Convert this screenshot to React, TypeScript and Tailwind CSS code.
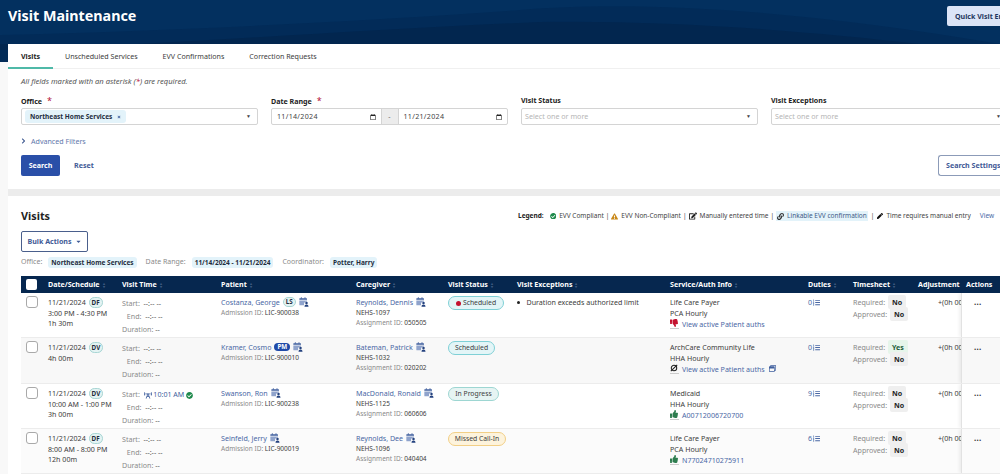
import { FaCheckCircle, FaExclamationTriangle, FaEdit, FaLink, FaPen, FaThumbsUp, FaThumbsDown, FaListOl, FaRegCalendar, FaChevronRight, FaCaretDown, FaBroadcastTower, FaRegWindowRestore, FaTimes } from "react-icons/fa";

const Star = () => <span className="text-[#b3123a] font-normal text-[9px]">*</span>;

const CalUser = () => (
  <svg viewBox="0 0 12 12" className="inline-block w-[10px] h-[10px] shrink-0" fill="#3f5f9e">
    <path d="M1 1.5h8a.6.6 0 0 1 .6.6V3.4H.4V2.1A.6.6 0 0 1 1 1.5z" />
    <path d="M.4 4.2h9.2v1.2A3 3 0 0 0 6 8.8V10H1a.6.6 0 0 1-.6-.6z" fill="#8fa3cc" />
    <rect x="2.2" y=".4" width="1.2" height="1.6" />
    <rect x="6.6" y=".4" width="1.2" height="1.6" />
    <circle cx="9" cy="7.2" r="1.5" fill="#24427f" />
    <path d="M6.6 11.6c0-1.6 1-2.5 2.4-2.5s2.4.9 2.4 2.5z" fill="#24427f" />
  </svg>
);

const Sort = () => (
  <span className="inline-flex flex-col ml-[3px] text-[#3d5a80] text-[4px] leading-[3px]">
    <span>▴</span>
    <span>▾</span>
  </span>
);

const Chip = ({ children }: { children: React.ReactNode }) => (
  <span className="bg-[#e3f3fa] rounded-[3px] px-[3px] py-[1px] font-bold text-[#1f2d3d] text-[6.5px] leading-[9px]">{children}</span>
);

const Select = ({ children }: { children: React.ReactNode }) => (
  <div className="h-[17px] border border-[#d4d4d4] rounded-[2px] bg-white flex items-center px-[3px] justify-between">
    {children}
    <span className="text-[#444] text-[5px] mr-[3px]">▼</span>
  </div>
);

const DateField = ({ v }: { v: string }) => (
  <div className="flex-1 h-[17px] flex items-center justify-between pl-[5px] pr-[3px] text-[7.1px] text-[#444] tracking-[0.3px]">
    <span>{v}</span>
    <FaRegCalendar className="text-[#222] w-[6px] h-[6px] mr-[2px]" />
  </div>
);

const Label = ({ children }: { children: React.ReactNode }) => (
  <div className="text-[7.1px] font-bold text-[#222] leading-[11px] mb-[2px] h-[11px]">{children}</div>
);

type Row = {
  date: string; tag: string; sched?: string; dur: string;
  start?: boolean;
  patient: string; badge?: string; adm: string;
  cg: string; nehs: string; asg: string;
  status: string; statusCls: string; statusW: string; dot?: boolean;
  exc?: string;
  pay: string; svc: string; auth: string; authKind: "down" | "none" | "up"; duties: string;
  req: string; bg: string; h: string;
};

const rows: Row[] = [
  { date: "11/21/2024", tag: "DF", sched: "3:00 PM - 4:30 PM", dur: "1h 30m", patient: "Costanza, George", badge: "LS", adm: "LIC-900038", cg: "Reynolds, Dennis", nehs: "NEHS-1097", asg: "050505", status: "Scheduled", statusCls: "bg-[#e3f5f7] border-[#7fd0d6]", statusW: "w-[56px]", dot: true, exc: "Duration exceeds authorized limit", pay: "Life Care Payer", svc: "PCA Hourly", auth: "View active Patient auths", authKind: "down", duties: "0", req: "No", bg: "bg-white", h: "h-[45px]" },
  { date: "11/21/2024", tag: "DV", dur: "4h 00m", patient: "Kramer, Cosmo", badge: "PM", adm: "LIC-900010", cg: "Bateman, Patrick", nehs: "NEHS-1032", asg: "020202", status: "Scheduled", statusCls: "bg-[#e3f5f7] border-[#7fd0d6]", statusW: "w-[47px]", pay: "ArchCare Community Life", svc: "HHA Hourly", auth: "View active Patient auths", authKind: "none", duties: "0", req: "Yes", bg: "bg-[#f8f8f8]", h: "h-[46px]" },
  { date: "11/21/2024", tag: "DV", sched: "10:00 AM - 1:00 PM", dur: "3h 00m", start: true, patient: "Swanson, Ron", adm: "LIC-900238", cg: "MacDonald, Ronald", nehs: "NEHS-1125", asg: "060606", status: "In Progress", statusCls: "bg-[#e6f4f3] border-[#9dd6d2]", statusW: "w-[51px]", pay: "Medicaid", svc: "HHA Hourly", auth: "A00712006720700", authKind: "up", duties: "9", req: "No", bg: "bg-white", h: "h-[45px]" },
  { date: "11/21/2024", tag: "DF", sched: "8:00 AM - 8:00 PM", dur: "12h 00m", patient: "Seinfeld, Jerry", adm: "LIC-900019", cg: "Reynolds, Dee", nehs: "NEHS-1096", asg: "040404", status: "Missed Call-In", statusCls: "bg-[#fdf3dc] border-[#f2cf86]", statusW: "w-[58px]", pay: "Life Care Payer", svc: "PCA Hourly", auth: "N77024710275911", authKind: "up", duties: "6", req: "No", bg: "bg-[#fbfbfb]", h: "h-[45px]" },
];

const cols = "grid-cols-[27px_74px_99px_135px_92px_69px_153px_138px_45px_65px_43px_38px]";

const Tag = ({ t, dark }: { t: string; dark?: boolean }) => (
  <span className={dark ? "ml-[1px] bg-[#1f4aa8] text-white rounded-full px-[3px] text-[6.3px] font-bold leading-[8px]" : "ml-[1px] bg-[#e4f3f3] border border-[#a9d6d4] text-[#1f2d3d] rounded-full px-[2px] text-[6.3px] font-bold leading-[8px]"}>{t}</span>
);

const AuthIcon = ({ k }: { k: Row["authKind"] }) => {
  if (k === "down") return <FaThumbsDown className="w-[8px] h-[8px] text-[#c4122f]" />;
  if (k === "up") return <FaThumbsUp className="w-[8px] h-[8px] text-[#2e7d4f]" />;
  return (
    <svg viewBox="0 0 10 10" className="w-[8px] h-[8px] text-[#222]" fill="none" stroke="currentColor" strokeWidth="1.3">
      <circle cx="5" cy="5" r="3.4" />
      <path d="M1 9 9 1" />
    </svg>
  );
};

const Yn = ({ v }: { v: string }) => (
  <span className={`${v === "Yes" ? "bg-[#e6f5ea] text-[#1d5c38]" : "bg-[#efefef] text-[#222]"} ml-[1px] font-bold px-[4px] rounded-[2px] py-[2px]`}>{v}</span>
);

function TableRow({ r }: { r: Row }) {
  return (
    <div className={`grid ${cols} ${r.h} ${r.bg} border-b border-[#ececec] text-[7.1px] text-[#3c3c3c] leading-[10.7px] overflow-hidden`}>
      <div className="pl-[5px] pt-[3px]">
        <div className="w-[12px] h-[12px] rounded-[3px] border border-[#a9a9a9] bg-white" />
      </div>
      <div className="pt-[4px] whitespace-nowrap">
        <div>{r.date} <Tag t={r.tag} /></div>
        {r.sched && <div>{r.sched}</div>}
        <div>{r.dur}</div>
      </div>
      <div className="pt-[4px] text-[#8a8a8a] leading-[12.8px] whitespace-nowrap">
        <div>Start:&nbsp; {r.start ? <span className="text-[#3f5f9e]"><FaBroadcastTower className="inline w-[8px] h-[7px]" /> 10:01 AM <FaCheckCircle className="inline w-[7px] h-[7px] text-[#1f8a4c]" /></span> : <span className="text-[#555]">--:-- --</span>}</div>
        <div className="pl-[3px]">&nbsp;End:&nbsp; <span className="text-[#555]">--:-- --</span></div>
        <div>Duration: <span className="text-[#555]">--</span></div>
      </div>
      <div className="pt-[4px] whitespace-nowrap">
        <div className="flex items-center gap-[2px] h-[10.7px]">
          <span className="text-[#4a68a5]">{r.patient}</span>
          {r.badge && <Tag t={r.badge} dark={r.badge === "PM"} />}
          <span className="ml-[1px] flex"><CalUser /></span>
        </div>
        <div className="mt-[0.5px] text-[6.5px]"><span className="text-[#8a8a8a]">Admission ID:</span> <span>{r.adm}</span></div>
      </div>
      <div className="pt-[4px] whitespace-nowrap">
        <div className="flex items-center gap-[3px] h-[10.7px]"><span className="text-[#4a68a5]">{r.cg}</span><CalUser /></div>
        <div className="text-[6.5px]">{r.nehs}</div>
        <div className="text-[6.5px]"><span className="text-[#8a8a8a]">Assignment ID:</span> {r.asg}</div>
      </div>
      <div className="pt-[3px]">
        <div className={`${r.statusW} h-[14px] border rounded-full flex items-center justify-center gap-[2px] whitespace-nowrap text-[6.8px] ${r.statusCls}`}>
          {r.dot && <span className="w-[5px] h-[5px] rounded-full bg-[#c4122f]" />}
          {r.status}
        </div>
      </div>
      <div className="pt-[4px] whitespace-nowrap">
        {r.exc && <div className="flex items-center"><span className="w-[2.5px] h-[2.5px] rounded-full bg-[#222] mr-[7px]" />{r.exc}</div>}
      </div>
      <div className="pt-[4px] whitespace-nowrap">
        <div>{r.pay}</div>
        <div>{r.svc}</div>
        <div className="flex items-center gap-[2px]">
          <span className="w-[9px] h-[11px] border-b border-[#ccc] flex items-center"><AuthIcon k={r.authKind} /></span>
          <span className="text-[#4a68a5] ml-[1px]">{r.auth}</span>
          {r.authKind === "none" && <FaRegWindowRestore className="ml-[2px] w-[7px] h-[7px] text-[#3f5f9e]" />}
        </div>
      </div>
      <div className="pt-[4px] text-[#4a68a5] whitespace-nowrap flex items-start gap-[1px]">
        <span>{r.duties}</span>
        <FaListOl className="w-[7px] h-[7px] mt-[2px]" />
      </div>
      <div className="pt-[3px] text-[#8a8a8a] whitespace-nowrap leading-[12px]">
        <div>Required: <Yn v={r.req} /></div>
        <div>Approved: <Yn v="No" /></div>
      </div>
      <div className="pt-[4px] pl-[20px] overflow-hidden whitespace-nowrap">+(0h 00m)</div>
      <div className="pt-[4px] pl-[12px] border-l border-[#e2e2e2] shadow-[-2px_0_3px_rgba(0,0,0,0.06)] font-bold text-[#333] text-[8px] bg-inherit relative tracking-[0.3px]">...</div>
    </div>
  );
}

export default function App() {
  return (
    <div className="w-[1000px] h-[474px] overflow-hidden bg-[#f8f8f8] font-['Noto_Sans',sans-serif] relative">
      <div className="absolute left-0 top-0 w-[1000px] h-[62px] bg-[#022b58] overflow-hidden">
        <svg viewBox="0 0 1000 62" preserveAspectRatio="none" className="w-full h-full">
          <path d="M0 35C200 30 380 20 520 10 640 0 800 10 1000 44V0H0Z" fill="#03305f" />
          <path d="M0 50C180 44 350 30 540 22 660 20 800 30 920 44H0Z" fill="#02264f" />
        </svg>
      </div>
      <div className="relative">
        <div className="h-[44px] pl-[8px] flex items-start justify-between">
          <h1 className="text-white font-bold text-[14.3px] leading-[32px]">Visit Maintenance</h1>
          <div className="mt-[6px] w-[53px] h-[20px] bg-[#dbe4f7] rounded-l-[2px] pl-[8px] text-[7.1px] leading-[20px] font-bold text-[#1f3660] whitespace-nowrap overflow-hidden">Quick Visit Entry</div>
        </div>
        <div className="ml-[8px] bg-white h-[145px]">
          <div className="h-[25px] border-b-[1.5px] border-[#f0f0f0] flex text-[7.1px] leading-[24px] text-[#3c3c3c]">
            <div className="w-[45px] border-b-2 border-[#4fb9a8] h-[25px] text-center font-bold text-[#222]">Visits</div>
            <div className="ml-[12px]">Unscheduled Services</div>
            <div className="ml-[25px]">EVV Confirmations</div>
            <div className="ml-[25px]">Correction Requests</div>
          </div>
          <div className="pl-[13px]">
            <div className="mt-[7px] h-[11px] text-[7.6px] italic leading-[11px] text-[#555]">All fields marked with an asterisk (<span className="text-[#b3123a]">*</span>) are required.</div>
            <div className="mt-[8px] grid grid-cols-[237px_237px_237px_237px] gap-[13px] w-[1000px]">
              <div>
                <Label>Office <span className="ml-[3px]"><Star /></span></Label>
                <Select>
                  <span className="bg-[#e3f3fa] rounded-[3px] pl-[5px] pr-[5px] h-[13px] flex items-center gap-[5px] text-[6.5px] font-bold text-[#1f2d3d]">Northeast Home Services <FaTimes className="w-[4px] h-[4px] text-[#3f5f9e]" /></span>
                </Select>
              </div>
              <div>
                <Label>Date Range <span className="ml-[3px]"><Star /></span></Label>
                <div className="h-[17px] border border-[#d4d4d4] rounded-[2px] flex items-center">
                  <DateField v="11/14/2024" />
                  <div className="w-[18px] h-[15px] bg-[#ececec] border-x border-[#d4d4d4] text-center text-[7px] leading-[15px] text-[#666]">-</div>
                  <DateField v="11/21/2024" />
                </div>
              </div>
              <div>
                <Label>Visit Status</Label>
                <Select><span className="text-[7.15px] text-[#b5b5b5]">Select one or more</span></Select>
              </div>
              <div>
                <Label>Visit Exceptions</Label>
                <Select><span className="text-[7.15px] text-[#b5b5b5]">Select one or more</span></Select>
              </div>
            </div>
            <div className="mt-[10px] flex items-center h-[12px] text-[7.1px] text-[#5f78ab]">
              <FaChevronRight className="w-[5px] h-[6px] text-[#2d4a86] mr-[5px]" />
              Advanced Filters
            </div>
            <div className="mt-[8px] flex items-center">
              <button className="w-[39px] h-[21px] bg-[#2a4fa8] rounded-[2px] text-white font-bold text-[7.1px]">Search</button>
              <span className="ml-[14px] font-bold text-[#3f5a96] text-[7.1px]">Reset</span>
              <button className="ml-auto w-[62px] h-[21px] border border-[#8c9bb8] border-r-0 rounded-l-[3px] pl-[7px] text-left font-bold text-[#3f5a96] text-[7.1px] whitespace-nowrap overflow-hidden">Search Settings</button>
            </div>
          </div>
        </div>
        <div className="h-[7px] ml-[8px] bg-[#ececec]" />
        <div className="ml-[8px] bg-white pl-[13px] h-[278px] overflow-hidden">
          <div className="flex items-center h-[40px]">
            <h2 className="font-bold text-[10.8px] text-[#222] w-[29px] whitespace-nowrap">Visits</h2>
            <div className="ml-[468px] flex items-center text-[6.5px] text-[#444] whitespace-nowrap">
              <span className="font-bold text-[#222] mr-[6px]">Legend:</span>
              <FaCheckCircle className="w-[6.5px] h-[6.5px] text-[#1f8a4c] mr-[3px]" /> EVV Compliant
              <span className="mx-[2px]">|</span>
              <FaExclamationTriangle className="w-[7px] h-[7px] text-[#c9891a] mr-[3px]" /> EVV Non-Compliant
              <span className="mx-[2px]">|</span>
              <FaEdit className="w-[8px] h-[8px] text-[#222] mr-[3px]" /> Manually entered time
              <span className="mx-[2px]">|</span>
              <span className="bg-[#e3f3fa] flex items-center px-[1px]"><FaLink className="w-[7px] h-[7px] text-[#333] mr-[3px]" /><span className="text-[#3f5a86]">Linkable EVV confirmation</span></span>
              <span className="mx-[3px]">|</span>
              <FaPen className="w-[6px] h-[6px] text-[#111] mr-[3px]" /> Time requires manual entry
              <span className="ml-[9px] text-[#4a68a5]">View</span>
            </div>
          </div>
          <div className="w-[67px] h-[21px] mt-[-5px] border border-[#4a5f8c] rounded-[2px] flex items-center justify-center gap-[3px] font-bold text-[7.1px] text-[#3f5a96]">
            Bulk Actions <FaCaretDown className="w-[7px] h-[7px]" />
          </div>
          <div className="mt-[4px] h-[13px] flex items-center text-[7px] text-[#8a8a8a] whitespace-nowrap">
            <span className="mr-[6px]">Office:</span><Chip>Northeast Home Services</Chip>
            <span className="ml-[9px] mr-[6px]">Date Range:</span><Chip>11/14/2024 - 11/21/2024</Chip>
            <span className="ml-[9px] mr-[6px]">Coordinator:</span><Chip>Potter, Harry</Chip>
          </div>
          <div className={`mt-[7px] grid ${cols} h-[17px] bg-[#06274f] text-white font-bold text-[7.1px] leading-[17px] whitespace-nowrap`}>
            <div className="pl-[5px] pt-[3px]"><div className="w-[11px] h-[11px] bg-white rounded-[2px]" /></div>
            <div className="flex items-center">Date/Schedule<Sort /></div>
            <div className="flex items-center">Visit Time<Sort /></div>
            <div className="flex items-center">Patient<Sort /></div>
            <div className="flex items-center">Caregiver<Sort /></div>
            <div className="flex items-center">Visit Status<Sort /></div>
            <div className="flex items-center">Visit Exceptions<Sort /></div>
            <div className="flex items-center">Service/Auth Info<Sort /></div>
            <div className="flex items-center">Duties<Sort /></div>
            <div className="flex items-center">Timesheet<Sort /></div>
            <div>Adjustment</div>
            <div className="pl-[5px]">Actions</div>
          </div>
          {rows.map((r, i) => <TableRow key={i} r={r} />)}
        </div>
      </div>
    </div>
  );
}
